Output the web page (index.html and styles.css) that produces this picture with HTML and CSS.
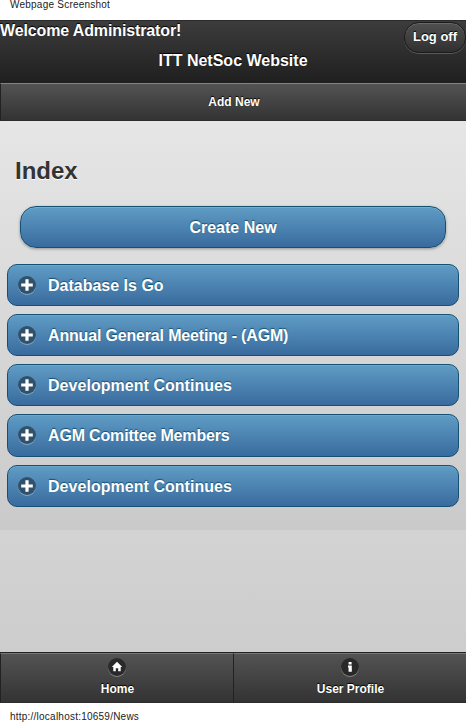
FILE: index.html
```html
<!DOCTYPE html>
<html lang="en">
<head>
<meta charset="utf-8">
<title>ITT NetSoc Website</title>
<link rel="stylesheet" href="styles.css">
</head>
<body>
<div class="print-head"><span class="w-head">Webpage Screenshot</span></div>
<header class="header">
  <div class="welcome">Welcome Administrator!</div>
  <h1 class="title">ITT NetSoc Website</h1>
  <a class="logoff">Log off</a>
</header>
<nav class="navbar"><a>Add New</a></nav>
<main class="page">
  <section class="content">
    <h2 class="heading">Index</h2>
    <a class="create">Create New</a>
    <div class="list">
      <h3 class="item"><svg class="plus" viewBox="0 0 18 19"><circle class="rim" cx="9" cy="10" r="9"/><circle class="disc" cx="9" cy="9" r="9"/><path class="sign" d="M9 3.2v11.6M3.2 9h11.6"/></svg><span>Database Is Go</span></h3>
      <h3 class="item"><svg class="plus" viewBox="0 0 18 19"><circle class="rim" cx="9" cy="10" r="9"/><circle class="disc" cx="9" cy="9" r="9"/><path class="sign" d="M9 3.2v11.6M3.2 9h11.6"/></svg><span class="snug">Annual General Meeting - (AGM)</span></h3>
      <h3 class="item"><svg class="plus" viewBox="0 0 18 19"><circle class="rim" cx="9" cy="10" r="9"/><circle class="disc" cx="9" cy="9" r="9"/><path class="sign" d="M9 3.2v11.6M3.2 9h11.6"/></svg><span class="loose">Development Continues</span></h3>
      <h3 class="item tall"><svg class="plus" viewBox="0 0 18 19"><circle class="rim" cx="9" cy="10" r="9"/><circle class="disc" cx="9" cy="9" r="9"/><path class="sign" d="M9 3.2v11.6M3.2 9h11.6"/></svg><span class="snug">AGM Comittee Members</span></h3>
      <h3 class="item"><svg class="plus" viewBox="0 0 18 19"><circle class="rim" cx="9" cy="10" r="9"/><circle class="disc" cx="9" cy="9" r="9"/><path class="sign" d="M9 3.2v11.6M3.2 9h11.6"/></svg><span class="loose">Development Continues</span></h3>
    </div>
  </section>
</main>
<footer class="footer">
  <a class="tab"><svg viewBox="0 0 18 19"><circle class="rim" cx="9" cy="10" r="9"/><circle class="disc" cx="9" cy="9" r="9"/><path class="glyph" d="M9 3.8 14.2 9H12.7V13.3H10.2V10.3H7.8V13.3H5.3V9H3.8Z"/></svg><span>Home</span></a>
  <a class="tab"><svg viewBox="0 0 18 19"><circle class="rim" cx="9" cy="10" r="9"/><circle class="disc" cx="9" cy="9" r="9"/><path class="glyph" d="M7.6 4h3v2.6h-3zM7 7.6h3.8v6.2H7.6V9.4H7z"/></svg><span>User Profile</span></a>
</footer>
<div class="print-foot"><span class="w-foot">http://localhost:10659/News</span></div>
</body>
</html>
```
FILE: styles.css
```css
* { box-sizing: border-box; }
body {
  margin: 0;
  width: 466px;
  height: 723px;
  overflow: hidden;
  display: flex;
  flex-direction: column;
  background: #fff;
  color: #fff;
  font-family: "Liberation Sans", Arial, sans-serif;
  font-weight: bold;
}
.print-head, .print-foot {
  flex: none;
  height: 20px;
  padding-left: 10px;
  color: #222;
  font-size: 10px;
  font-weight: normal;
  line-height: 12px;
  white-space: nowrap;
}
.print-head { line-height: 9px; }
.print-foot { padding-top: 8px; }
.w-head { letter-spacing: 0.23px; }
.w-foot { letter-spacing: 0.23px; }
.header {
  position: relative;
  flex: none;
  height: 63px;
  border-top: 1px solid #2a2a2a;
  background: linear-gradient(#3c3c3c, #1f1f1f);
  text-shadow: 0 -1px 1px #000;
}
.welcome { font-size: 16px; line-height: 20px; letter-spacing: -0.13px; }
.title {
  margin: 10px 0 0;
  font-size: 16px;
  line-height: 20px;
  text-align: center;
}
.logoff {
  position: absolute;
  top: 1px;
  right: 0;
  width: 62px;
  height: 31px;
  border: 1px solid #1b1b1b;
  border-radius: 15px;
  background: linear-gradient(#505050, #303030);
  box-shadow: inset 0 1px 0 #6a6a6a, 0 1px 0 #5a5a5a;
  font-size: 13px;
  line-height: 27px;
  text-align: center;
}
.navbar {
  flex: none;
  height: 38px;
  padding-left: 1px;
  border-left: 1px solid #222;
  border-top: 1px solid #828282;
  border-bottom: 1px solid #2c2c2c;
  background: linear-gradient(#535353, #333);
  font-size: 12px;
  line-height: 36px;
  text-align: center;
  text-shadow: 0 -1px 1px #000;
}
.page {
  flex: none;
  height: 531px;
  background: linear-gradient(#d3d3d3, #cdcdcd) 0 409px / 100% 122px no-repeat;
}
.content {
  height: 409px;
  padding: 35px 7px 0;
  background: linear-gradient(#e6e6e6, #cacaca);
}
.heading {
  margin: 0 0 0 8px;
  color: #333;
  font-size: 24px;
  line-height: 30px;
  text-shadow: 0 1px 0 #fff;
}
.create {
  display: block;
  height: 42px;
  margin: 20px 13px 16px;
  border: 1px solid #145072;
  border-radius: 16px;
  background: linear-gradient(#5f9cc5, #396b9e);
  box-shadow: inset 0 1px 0 #73aed3, 0 1px 3px rgba(0, 0, 0, .35);
  font-size: 16px;
  line-height: 41px;
  text-align: center;
  text-shadow: 0 -1px 1px #145072;
}
.list { display: flex; flex-direction: column; gap: 8px; }
.item {
  display: flex;
  align-items: center;
  gap: 12px;
  height: 42px;
  margin: 0;
  padding-left: 10px;
  border: 1px solid #145072;
  border-radius: 10px;
  background: linear-gradient(#5f9cc5, #396b9e);
  box-shadow: inset 0 1px 0 #6aa6cd;
  font-size: 16px;
  line-height: 20px;
  text-shadow: 0 -1px 1px #145072;
}
.item span { padding-top: 2px; }
.item.tall { height: 43px; }
.item.tall span { padding-top: 0; }
.snug { letter-spacing: -0.17px; }
.loose { letter-spacing: 0.04px; }
svg { display: block; width: 18px; height: 19px; flex: none; overflow: visible; }
.rim { fill: #fff; fill-opacity: .35; }
.disc { fill: #2f516c; }
.sign { fill: none; stroke: #fff; stroke-width: 3.2; }
.glyph { fill: #fff; }
.footer {
  flex: none;
  display: flex;
  height: 51px;
  border-top: 1px solid #222;
}
.tab {
  flex: 1;
  display: flex;
  flex-direction: column;
  align-items: center;
  padding-top: 4px;
  border-left: 1px solid #222;
  border-top: 1px solid #777;
  border-bottom: 1px solid #2c2c2c;
  background: linear-gradient(#535353, #333);
  font-size: 12px;
  line-height: 16px;
  text-shadow: 0 -1px 1px #000;
}
.tab span { margin: 4px 0 0 1px; }
.tab .disc { fill: #292929; }
```
